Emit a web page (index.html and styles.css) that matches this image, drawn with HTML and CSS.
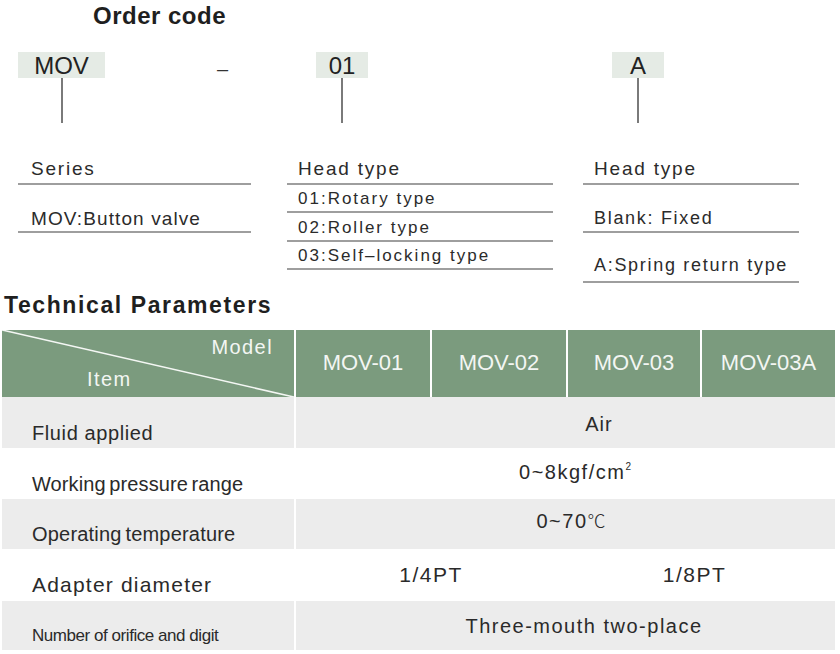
FILE: index.html
```html
<!DOCTYPE html>
<html lang="en">
<head>
<meta charset="utf-8">
<title>Order code</title>
<link rel="stylesheet" href="styles.css">
</head>
<body>
<div class="page">
  <h1 class="title-order">Order code</h1>

  <div class="codes">
    <div class="col-series code-group">
      <div class="code">
        <div class="code-box code-box-wide">MOV</div>
        <div class="stem"></div>
      </div>
      <span class="dash">–</span>
    </div>
    <div class="col-head code-group">
      <div class="code code-offset">
        <div class="code-box code-box-narrow">01</div>
        <div class="stem"></div>
      </div>
    </div>
    <div class="col-return code-group">
      <div class="code code-offset">
        <div class="code-box code-box-narrow">A</div>
        <div class="stem"></div>
      </div>
    </div>
  </div>

  <div class="desc">
    <div class="col-series">
      <div class="item item-title">Series</div>
      <div class="item item-series-value">MOV:Button valve</div>
    </div>
    <div class="col-head">
      <div class="item item-title">Head type</div>
      <div class="item item-option">01:Rotary type</div>
      <div class="item item-option">02:Roller type</div>
      <div class="item item-option">03:Self–locking type</div>
    </div>
    <div class="col-return">
      <div class="item item-title">Head type</div>
      <div class="item item-return">Blank: Fixed</div>
      <div class="item item-return item-return-last">A:Spring return type</div>
    </div>
  </div>

  <h2 class="title-tech">Technical Parameters</h2>

  <div class="spec">
    <div class="th th-corner">
      <svg class="corner-line" viewBox="0 0 292 67" preserveAspectRatio="none" aria-hidden="true">
        <line x1="0" y1="0" x2="292" y2="67" stroke="#f4f7f4" stroke-width="1.6" vector-effect="non-scaling-stroke"/>
      </svg>
      <span class="corner-model">Model</span>
      <span class="corner-item">Item</span>
    </div>
    <div class="th">MOV-01</div>
    <div class="th">MOV-02</div>
    <div class="th">MOV-03</div>
    <div class="th">MOV-03A</div>

    <div class="label row-gray label-fluid"><span>Fluid applied</span></div>
    <div class="value row-gray value-air"><span>Air</span></div>

    <div class="label label-pressure"><span>Working pressure range</span></div>
    <div class="value value-pressure"><span>0~8kgf/cm<sup class="sup">2</sup></span></div>

    <div class="label row-gray label-temp"><span>Operating temperature</span></div>
    <div class="value row-gray value-temp"><span>0~70<span class="celsius">℃</span></span></div>

    <div class="label label-adapter"><span>Adapter diameter</span></div>
    <div class="value value-adapter value-left"><span>1/4PT</span></div>
    <div class="value value-adapter value-right"><span>1/8PT</span></div>

    <div class="label row-gray label-orifice"><span>Number of orifice and digit</span></div>
    <div class="value row-gray value-orifice"><span>Three-mouth two-place</span></div>
  </div>
</div>
</body>
</html>
```

FILE: styles.css
```css
html, body {
  margin: 0;
  padding: 0;
  background: #ffffff;
}

body {
  font-family: "Liberation Sans", Arial, "Noto Sans CJK SC", sans-serif;
  color: #222222;
}

.page {
  width: 840px;
  height: 654px;
  padding-top: 2px;
  box-sizing: border-box;
  overflow: hidden;
}

/* ---------- Order code ---------- */
.title-order {
  margin: 0 0 0 93px;
  font-size: 24px;
  line-height: 28px;
  font-weight: bold;
  letter-spacing: 0.5px;
  color: #1f1f1f;
}

.codes {
  display: flex;
  align-items: flex-start;
  padding-left: 18px;
  margin-top: 22px;
}

.col-series { width: 233px; }
.col-head { width: 266px; margin-left: 36px; }
.col-return { width: 216px; margin-left: 30px; }

.code-group {
  display: flex;
  align-items: flex-start;
}

.code {
  display: flex;
  flex-direction: column;
  align-items: center;
}

.code-offset { margin-left: 29px; }

.code-box {
  height: 26px;
  box-sizing: border-box;
  padding-top: 1px;
  line-height: 25px;
  font-size: 24px;
  text-align: center;
  background: #e5ebe5;
  color: #222222;
}

.code-box-wide { width: 87px; }
.code-box-narrow { width: 52px; }

.stem {
  width: 2px;
  height: 45px;
  background: #7a7a7a;
}

.dash {
  margin-left: 112px;
  padding-top: 4px;
  font-size: 20px;
  line-height: 26px;
  color: #333333;
}

/* ---------- Descriptions ---------- */
.desc {
  display: flex;
  align-items: flex-start;
  padding-left: 18px;
  margin-top: 27px;
}

.item {
  display: flex;
  align-items: flex-end;
  border-bottom: 2px solid #9e9e9e;
  color: #2b2b2b;
  white-space: nowrap;
}

.col-series .item { padding-left: 13px; }
.col-head .item,
.col-return .item { padding-left: 11px; }

.item-title {
  height: 30px;
  padding-bottom: 3px;
  font-size: 19px;
  line-height: 22px;
  letter-spacing: 1.8px;
}

.item-series-value {
  height: 45px;
  padding-bottom: 1px;
  font-size: 19px;
  line-height: 22px;
  letter-spacing: 1.1px;
}

.item-option {
  height: 24.3px;
  padding-bottom: 2px;
  font-size: 17px;
  line-height: 20px;
  letter-spacing: 2px;
}

.item-return {
  height: 43.5px;
  padding-bottom: 2px;
  font-size: 18px;
  line-height: 21px;
  letter-spacing: 1.7px;
}

.item-return-last {
  padding-bottom: 4.7px;
}

/* ---------- Technical parameters ---------- */
.title-tech {
  margin: 9px 0 0 0;
  padding-left: 4px;
  font-size: 23px;
  line-height: 26px;
  font-weight: bold;
  letter-spacing: 1.6px;
  color: #1f1f1f;
}

.spec {
  display: grid;
  grid-template-columns: 292px 134px 134px 132px 133px;
  grid-template-rows: 67px 51px 51px 50px 52px 49px;
  column-gap: 2px;
  margin: 12px 0 0 2px;
}

.th {
  display: flex;
  align-items: center;
  justify-content: center;
  background: #7b9b7e;
  color: #f3f6f3;
  font-size: 22px;
  line-height: 26px;
}

.th-corner {
  position: relative;
  flex-direction: column;
  align-items: stretch;
  justify-content: space-between;
  padding: 6px 21px 7px 85px;
  font-size: 20px;
  line-height: 22px;
  letter-spacing: 1.4px;
}

.corner-line {
  position: absolute;
  left: 0;
  top: 0;
  width: 100%;
  height: 100%;
}

.corner-model { align-self: flex-end; position: relative; }
.corner-item { align-self: flex-start; position: relative; }

.row-gray { background: #ececec; }

.label {
  display: flex;
  align-items: flex-end;
  padding: 0 0 3.5px 30px;
  font-size: 20px;
  line-height: 22px;
  color: #2a2a2a;
  white-space: nowrap;
}

.label-fluid { letter-spacing: 0.6px; }
.label-pressure { word-spacing: -2px; letter-spacing: 0.1px; padding-bottom: 4.2px; }
.label-temp { word-spacing: -2px; letter-spacing: 0.2px; }
.label-adapter { font-size: 21px; line-height: 24px; letter-spacing: 1.2px; }
.label-orifice { font-size: 17px; line-height: 20px; letter-spacing: -0.45px; }

.value {
  grid-column: 2 / 6;
  display: flex;
  align-items: flex-end;
  justify-content: center;
  font-size: 20px;
  line-height: 22px;
  letter-spacing: 1.5px;
  color: #2a2a2a;
  white-space: nowrap;
}

.value-air { padding: 0 0 13px 67px; letter-spacing: 1px; }
.value-pressure { padding: 0 0 15.6px 19px; }
.value-temp { padding: 0 0 16.6px 11px; }
.value-adapter { font-size: 21px; line-height: 24px; padding-bottom: 13.6px; }
.value-left { grid-column: 2 / 4; }
.value-right { grid-column: 4 / 6; padding-right: 14px; }
.value-orifice { padding: 0 0 13.2px 37px; }

.sup {
  font-size: 10px;
  line-height: 0;
  vertical-align: 9px;
  letter-spacing: 0;
}

.celsius {
  font-family: "Noto Sans CJK SC", "DejaVu Sans", sans-serif;
  font-weight: 300;
  font-size: 18px;
  letter-spacing: 0;
}
```
